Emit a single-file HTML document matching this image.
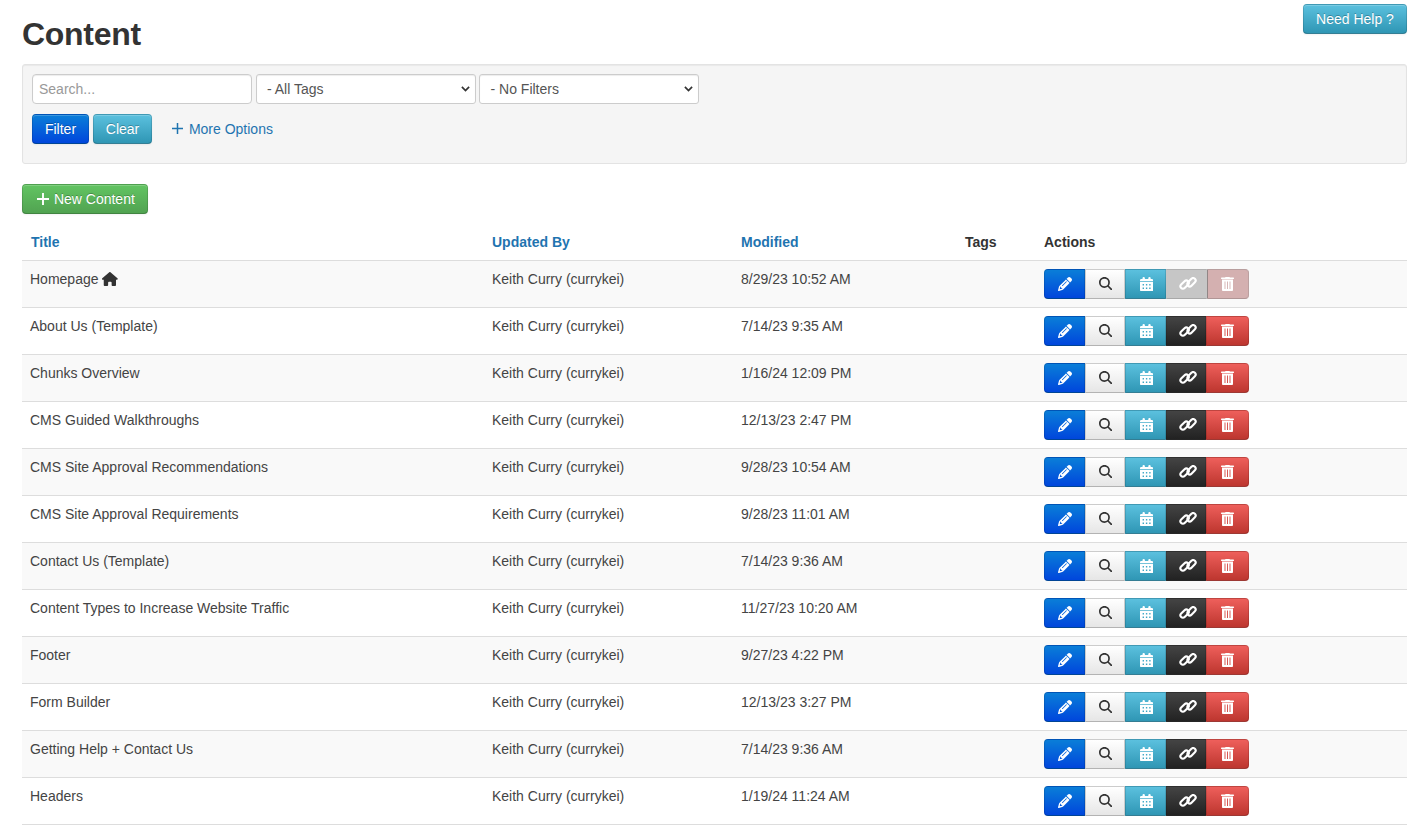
<!DOCTYPE html>
<html><head><meta charset="utf-8">
<style>
*{box-sizing:border-box}
html,body{margin:0;padding:0;background:#fff}
body{font-family:"Liberation Sans",sans-serif;font-size:14px;line-height:20px;color:#333;width:1425px;height:825px;overflow:hidden;position:relative}
h1{position:absolute;left:22px;top:13.5px;margin:0;font-size:32px;line-height:40px;font-weight:bold;color:#333;letter-spacing:-0.3px}
.btn{position:absolute;display:inline-block;height:30px;padding:4px 0;font-size:14px;line-height:20px;text-align:center;color:#fff;border:1px solid rgba(0,0,0,.12);border-bottom-color:rgba(0,0,0,.28);border-radius:4px;text-shadow:0 -1px 0 rgba(0,0,0,.25);box-shadow:inset 0 1px 0 rgba(255,255,255,.2),0 1px 2px rgba(0,0,0,.05)}
.b-info{background:#49afcd linear-gradient(#5bc0de,#2f96b4) repeat-x}
.b-primary{background:#0060d0 linear-gradient(#0a7ed8,#0046dc) repeat-x}
.b-success{background:#5bb75b linear-gradient(#62c462,#51a351) repeat-x}
.help{left:1303px;top:4px;width:104px}
.well{position:absolute;left:22px;top:64px;width:1385px;height:100px;background:#f5f5f5;border:1px solid #e3e3e3;border-radius:3px;box-shadow:inset 0 1px 1px rgba(0,0,0,.05)}
.inp{position:absolute;top:74px;height:30px;width:220px;background:#fff;border:1px solid #ccc;border-radius:4px;box-shadow:inset 0 1px 1px rgba(0,0,0,.075);font-size:14px;line-height:20px;padding:4px 0}
.inp span{position:absolute;top:4px}
.ph{color:#999}
.sel{color:#555}
.chev{position:absolute;top:11px;width:10px;height:6px}
.more{position:absolute;left:171px;top:119px;color:#1f74b0;white-space:nowrap}
table{position:absolute;left:22px;top:224px;border-collapse:collapse;table-layout:fixed;width:1385px}
th,td{padding:8px;text-align:left;vertical-align:top;line-height:20px}
th{font-weight:bold;vertical-align:bottom;height:36px}
th a{color:#1f74b0;text-decoration:none}
td{border-top:1px solid #ddd;height:47px;color:#444}
tbody tr:nth-child(odd) td{background:#f9f9f9}
tbody tr:last-child td{border-bottom:1px solid #ddd}
.grp{display:flex;height:30px;width:205px}
.g{height:30px;position:relative;border:1px solid rgba(0,0,0,.12);border-bottom-color:rgba(0,0,0,.28)}
.g svg{position:absolute}
.g1{width:41px;border-radius:4px 0 0 4px;background:#0060d0 linear-gradient(#0a7ed8,#0046dc) repeat-x}
.g2{width:40px;background:#f5f5f5 linear-gradient(#fff,#e6e6e6) repeat-x;border-color:#ccc #ccc #b3b3b3}
.g3{width:41px;background:#49afcd linear-gradient(#5bc0de,#2f96b4) repeat-x}
.g4{width:40px;background:#363636 linear-gradient(#444,#222) repeat-x}
.g5{width:43px;border-radius:0 4px 4px 0;background:#da4f49 linear-gradient(#ee5f5b,#bd362f) repeat-x}
.dis .g4{width:41px;background:#c6c6c6;border-color:#b0b0b0 #c6c6c6 #a8a8a8 #c6c6c6}
.dis .g5 svg{left:13.3px!important}
.dis .g5{width:42px;background:#d4b0b0;border-color:#b89e9e #bba0a0 #b09595 #918686}
</style></head><body>
<h1>Content</h1>
<div class="btn b-info help">Need Help ?</div>
<div class="well"></div>
<div class="inp" style="left:32px"><span class="ph" style="left:6px">Search...</span></div>
<div class="inp" style="left:256px;border-radius:3px"><span class="sel" style="left:10px">- All Tags</span>
<svg class="chev" style="left:204px;width:9px;height:6px;top:10.8px" viewBox="0 0 9 6"><path d="M.9 .9L4.5 4.5L8.1 .9" fill="none" stroke="#333" stroke-width="1.7"/></svg></div>
<div class="inp" style="left:479px;border-radius:3px"><span class="sel" style="left:10.5px">- No Filters</span>
<svg class="chev" style="left:204px;width:9px;height:6px;top:10.8px" viewBox="0 0 9 6"><path d="M.9 .9L4.5 4.5L8.1 .9" fill="none" stroke="#333" stroke-width="1.7"/></svg></div>
<div class="btn b-primary" style="left:32px;top:114px;width:57px">Filter</div>
<div class="btn b-info" style="left:93px;top:114px;width:59px">Clear</div>
<div class="more"><svg width="11" height="11" viewBox="0 0 11 11" style="position:relative;top:0px;left:0.5px;margin-right:3px"><path d="M5.5 0V11M0 5.5H11" stroke="#1f74b0" stroke-width="1.5"/></svg> More Options</div>
<div class="btn b-success" style="left:22px;top:184px;width:126px;text-align:left;padding-left:13.5px"><svg width="12" height="12" viewBox="0 0 12 12" style="position:relative;top:1px;margin-right:1.5px"><path d="M6 0V12M0 6H12" stroke="#fff" stroke-width="1.9"/></svg> New Content</div>
<table>
<colgroup><col style="width:462px"><col style="width:249px"><col style="width:224px"><col style="width:79px"><col style="width:371px"></colgroup>
<thead><tr><th style="padding-left:9px"><a>Title</a></th><th><a>Updated By</a></th><th><a>Modified</a></th><th>Tags</th><th>Actions</th></tr></thead>
<tbody id="tb">
<tr class="dis"><td>Homepage <svg style="vertical-align:-2px;margin-left:0px" width="15.75" height="14" viewBox="0 0 576 512"><path fill="#333" d="M575.8 255.5c0 18-15 32.1-32 32.1h-32l.7 160.2c0 2.7-.2 5.4-.5 8.1V472c0 22.1-17.9 40-40 40H456c-1.1 0-2.2 0-3.3-.1c-1.4 .1-2.8 .1-4.2 .1H416 392c-22.1 0-40-17.900-40-40V448 384c0-17.7-14.3-32-32-32H256c-17.7 0-32 14.3-32 32v64 24c0 22.1-17.9 40-40 40H160 128.1c-1.5 0-3-.1-4.5-.2c-1.2 .1-2.4 .2-3.6 .2H104c-22.1 0-40-17.9-40-40V360c0-.9 0-1.9 .1-2.8V287.6H32c-18 0-32-14-32-32.1c0-9 3-17 10-24L266.4 8c7-7 15-8 22-8s15 2 21 7L564.8 231.5c8 7 12 15 11 24z"/></svg></td><td>Keith Curry (currykei)</td><td>8/29/23 10:52 AM</td><td></td><td><div class="grp"><div class="g g1"><svg style="left:13px;top:7px" width="14" height="14" viewBox="0 0 512 512"><path fill="#fff" d="M410.3 231l11.3-11.3-33.9-33.9-62.1-62.1L291.7 89.8l-11.3 11.3-22.6 22.6L58.6 322.9c-10.4 10.4-18 23.300-22.2 37.4L1 480.7c-2.5 8.4-.2 17.5 6.1 23.7s15.3 8.5 23.7 6.1l120.3-35.4c14.1-4.2 27-11.8 37.4-22.2L387.7 253.7 410.3 231zM160 399.4l-9.1 22.7c-4 3.1-8.5 5.4-13.3 6.9L59.4 452l23-78.1c1.4-4.9 3.8-9.4 6.9-13.3l22.7-9.1v32c0 8.8 7.2 16 16 16h32zM362.7 18.7L348.3 33.2 325.7 55.8 314.3 67.1l33.9 33.9 62.1 62.1 33.9 33.9 11.3-11.3 22.6-22.6 14.5-14.5c25-25 25-65.5 0-90.5L453.3 18.7c-25-25-65.5-25-90.5 0zm-47.4 168l-144 144c-6.2 6.2-16.4 6.2-22.6 0s-6.2-16.4 0-22.6l144-144c6.2-6.2 16.4-6.2 22.6 0s6.2 16.4 0 22.6z"/></svg></div><div class="g g2"><svg style="left:13px;top:7px" width="13.4" height="13.4" viewBox="0 0 512 512"><path fill="#333" d="M416 208c0 45.9-14.9 88.3-40 122.7L502.6 457.4c12.5 12.5 12.5 32.8 0 45.3s-32.8 12.5-45.3 0L330.7 376c-34.4 25.2-76.8 40-122.7 40C93.1 416 0 322.9 0 208S93.1 0 208 0S416 93.1 416 208zM208 352a144 144 0 1 0 0-288 144 144 0 1 0 0 288z"/></svg></div><div class="g g3"><svg style="left:13.9px;top:6.8px" width="13.2" height="14.2" viewBox="0 0 13.2 14.2"><path fill="#fff" fill-rule="evenodd" d="M2.5 2.1V1.2A1.2 1.2 0 0 1 4.9 1.2V2.1H8.3V1.2A1.2 1.2 0 0 1 10.7 1.2V2.1H12A1.2 1.2 0 0 1 13.2 3.3V4.3H0V3.3A1.2 1.2 0 0 1 1.2 2.1ZM0 4.9H13.2V13A1.2 1.2 0 0 1 12 14.2H1.2A1.2 1.2 0 0 1 0 13ZM2.6 7.1h1.4v1.4h-1.4ZM5.9 7.1h1.4v1.4h-1.4ZM9.2 7.1h1.4v1.4h-1.4ZM2.6 10.5h1.4v1.4h-1.4ZM5.9 10.5h1.4v1.4h-1.4ZM9.2 10.5h1.4v1.4h-1.4Z"/></svg></div><div class="g g4"><svg style="left:12px;top:7px" width="18" height="14" viewBox="0 0 18 14"><g fill="none" stroke="#fff" stroke-width="2.1"><rect x="0.75" y="5.15" width="9.7" height="4.9" rx="2.45" transform="rotate(-45 5.6 7.6)"/><rect x="7.61" y="2.82" width="9.7" height="4.9" rx="2.45" transform="rotate(-45 12.46 5.27)"/></g></svg></div><div class="g g5"><svg style="left:14.3px;top:7px" width="13" height="14.3" viewBox="0 0 13 14.3"><path fill="#fff" fill-rule="evenodd" d="M4.5 0H8.5L8.9 .4H12.4A.6 .6 0 0 1 13 1V1.6A.4 .4 0 0 1 12.6 2H.4A.4 .4 0 0 1 0 1.6V1A.6 .6 0 0 1 .6 .4H4.1ZM1 2.4H12V12.7A1.6 1.6 0 0 1 10.4 14.3H2.6A1.6 1.6 0 0 1 1 12.7ZM3.55 4.4V12H4.45V4.4ZM6.05 4.4V12H6.95V4.4ZM8.55 4.4V12H9.45V4.4Z"/></svg></div></div></td></tr>
<tr><td>About Us (Template)</td><td>Keith Curry (currykei)</td><td>7/14/23 9:35 AM</td><td></td><td><div class="grp"><div class="g g1"><svg style="left:13px;top:7px" width="14" height="14" viewBox="0 0 512 512"><path fill="#fff" d="M410.3 231l11.3-11.3-33.9-33.9-62.1-62.1L291.7 89.8l-11.3 11.3-22.6 22.6L58.6 322.9c-10.4 10.4-18 23.300-22.2 37.4L1 480.7c-2.5 8.4-.2 17.5 6.1 23.7s15.3 8.5 23.7 6.1l120.3-35.4c14.1-4.2 27-11.8 37.4-22.2L387.7 253.7 410.3 231zM160 399.4l-9.1 22.7c-4 3.1-8.5 5.4-13.3 6.9L59.4 452l23-78.1c1.4-4.9 3.8-9.4 6.9-13.3l22.7-9.1v32c0 8.8 7.2 16 16 16h32zM362.7 18.7L348.3 33.2 325.7 55.8 314.3 67.1l33.9 33.9 62.1 62.1 33.9 33.9 11.3-11.3 22.6-22.6 14.5-14.5c25-25 25-65.5 0-90.5L453.3 18.7c-25-25-65.5-25-90.5 0zm-47.4 168l-144 144c-6.2 6.2-16.4 6.2-22.6 0s-6.2-16.4 0-22.6l144-144c6.2-6.2 16.4-6.2 22.6 0s6.2 16.4 0 22.6z"/></svg></div><div class="g g2"><svg style="left:13px;top:7px" width="13.4" height="13.4" viewBox="0 0 512 512"><path fill="#333" d="M416 208c0 45.9-14.9 88.3-40 122.7L502.6 457.4c12.5 12.5 12.5 32.8 0 45.3s-32.8 12.5-45.3 0L330.7 376c-34.4 25.2-76.8 40-122.7 40C93.1 416 0 322.9 0 208S93.1 0 208 0S416 93.1 416 208zM208 352a144 144 0 1 0 0-288 144 144 0 1 0 0 288z"/></svg></div><div class="g g3"><svg style="left:13.9px;top:6.8px" width="13.2" height="14.2" viewBox="0 0 13.2 14.2"><path fill="#fff" fill-rule="evenodd" d="M2.5 2.1V1.2A1.2 1.2 0 0 1 4.9 1.2V2.1H8.3V1.2A1.2 1.2 0 0 1 10.7 1.2V2.1H12A1.2 1.2 0 0 1 13.2 3.3V4.3H0V3.3A1.2 1.2 0 0 1 1.2 2.1ZM0 4.9H13.2V13A1.2 1.2 0 0 1 12 14.2H1.2A1.2 1.2 0 0 1 0 13ZM2.6 7.1h1.4v1.4h-1.4ZM5.9 7.1h1.4v1.4h-1.4ZM9.2 7.1h1.4v1.4h-1.4ZM2.6 10.5h1.4v1.4h-1.4ZM5.9 10.5h1.4v1.4h-1.4ZM9.2 10.5h1.4v1.4h-1.4Z"/></svg></div><div class="g g4"><svg style="left:12px;top:7px" width="18" height="14" viewBox="0 0 18 14"><g fill="none" stroke="#fff" stroke-width="2.1"><rect x="0.75" y="5.15" width="9.7" height="4.9" rx="2.45" transform="rotate(-45 5.6 7.6)"/><rect x="7.61" y="2.82" width="9.7" height="4.9" rx="2.45" transform="rotate(-45 12.46 5.27)"/></g></svg></div><div class="g g5"><svg style="left:14.3px;top:7px" width="13" height="14.3" viewBox="0 0 13 14.3"><path fill="#fff" fill-rule="evenodd" d="M4.5 0H8.5L8.9 .4H12.4A.6 .6 0 0 1 13 1V1.6A.4 .4 0 0 1 12.6 2H.4A.4 .4 0 0 1 0 1.6V1A.6 .6 0 0 1 .6 .4H4.1ZM1 2.4H12V12.7A1.6 1.6 0 0 1 10.4 14.3H2.6A1.6 1.6 0 0 1 1 12.7ZM3.55 4.4V12H4.45V4.4ZM6.05 4.4V12H6.95V4.4ZM8.55 4.4V12H9.45V4.4Z"/></svg></div></div></td></tr>
<tr><td>Chunks Overview</td><td>Keith Curry (currykei)</td><td>1/16/24 12:09 PM</td><td></td><td><div class="grp"><div class="g g1"><svg style="left:13px;top:7px" width="14" height="14" viewBox="0 0 512 512"><path fill="#fff" d="M410.3 231l11.3-11.3-33.9-33.9-62.1-62.1L291.7 89.8l-11.3 11.3-22.6 22.6L58.6 322.9c-10.4 10.4-18 23.300-22.2 37.4L1 480.7c-2.5 8.4-.2 17.5 6.1 23.7s15.3 8.5 23.7 6.1l120.3-35.4c14.1-4.2 27-11.8 37.4-22.2L387.7 253.7 410.3 231zM160 399.4l-9.1 22.7c-4 3.1-8.5 5.4-13.3 6.9L59.4 452l23-78.1c1.4-4.9 3.8-9.4 6.9-13.3l22.7-9.1v32c0 8.8 7.2 16 16 16h32zM362.7 18.7L348.3 33.2 325.7 55.8 314.3 67.1l33.9 33.9 62.1 62.1 33.9 33.9 11.3-11.3 22.6-22.6 14.5-14.5c25-25 25-65.5 0-90.5L453.3 18.7c-25-25-65.5-25-90.5 0zm-47.4 168l-144 144c-6.2 6.2-16.4 6.2-22.6 0s-6.2-16.4 0-22.6l144-144c6.2-6.2 16.4-6.2 22.6 0s6.2 16.4 0 22.6z"/></svg></div><div class="g g2"><svg style="left:13px;top:7px" width="13.4" height="13.4" viewBox="0 0 512 512"><path fill="#333" d="M416 208c0 45.9-14.9 88.3-40 122.7L502.6 457.4c12.5 12.5 12.5 32.8 0 45.3s-32.8 12.5-45.3 0L330.7 376c-34.4 25.2-76.8 40-122.7 40C93.1 416 0 322.9 0 208S93.1 0 208 0S416 93.1 416 208zM208 352a144 144 0 1 0 0-288 144 144 0 1 0 0 288z"/></svg></div><div class="g g3"><svg style="left:13.9px;top:6.8px" width="13.2" height="14.2" viewBox="0 0 13.2 14.2"><path fill="#fff" fill-rule="evenodd" d="M2.5 2.1V1.2A1.2 1.2 0 0 1 4.9 1.2V2.1H8.3V1.2A1.2 1.2 0 0 1 10.7 1.2V2.1H12A1.2 1.2 0 0 1 13.2 3.3V4.3H0V3.3A1.2 1.2 0 0 1 1.2 2.1ZM0 4.9H13.2V13A1.2 1.2 0 0 1 12 14.2H1.2A1.2 1.2 0 0 1 0 13ZM2.6 7.1h1.4v1.4h-1.4ZM5.9 7.1h1.4v1.4h-1.4ZM9.2 7.1h1.4v1.4h-1.4ZM2.6 10.5h1.4v1.4h-1.4ZM5.9 10.5h1.4v1.4h-1.4ZM9.2 10.5h1.4v1.4h-1.4Z"/></svg></div><div class="g g4"><svg style="left:12px;top:7px" width="18" height="14" viewBox="0 0 18 14"><g fill="none" stroke="#fff" stroke-width="2.1"><rect x="0.75" y="5.15" width="9.7" height="4.9" rx="2.45" transform="rotate(-45 5.6 7.6)"/><rect x="7.61" y="2.82" width="9.7" height="4.9" rx="2.45" transform="rotate(-45 12.46 5.27)"/></g></svg></div><div class="g g5"><svg style="left:14.3px;top:7px" width="13" height="14.3" viewBox="0 0 13 14.3"><path fill="#fff" fill-rule="evenodd" d="M4.5 0H8.5L8.9 .4H12.4A.6 .6 0 0 1 13 1V1.6A.4 .4 0 0 1 12.6 2H.4A.4 .4 0 0 1 0 1.6V1A.6 .6 0 0 1 .6 .4H4.1ZM1 2.4H12V12.7A1.6 1.6 0 0 1 10.4 14.3H2.6A1.6 1.6 0 0 1 1 12.7ZM3.55 4.4V12H4.45V4.4ZM6.05 4.4V12H6.95V4.4ZM8.55 4.4V12H9.45V4.4Z"/></svg></div></div></td></tr>
<tr><td>CMS Guided Walkthroughs</td><td>Keith Curry (currykei)</td><td>12/13/23 2:47 PM</td><td></td><td><div class="grp"><div class="g g1"><svg style="left:13px;top:7px" width="14" height="14" viewBox="0 0 512 512"><path fill="#fff" d="M410.3 231l11.3-11.3-33.9-33.9-62.1-62.1L291.7 89.8l-11.3 11.3-22.6 22.6L58.6 322.9c-10.4 10.4-18 23.300-22.2 37.4L1 480.7c-2.5 8.4-.2 17.5 6.1 23.7s15.3 8.5 23.7 6.1l120.3-35.4c14.1-4.2 27-11.8 37.4-22.2L387.7 253.7 410.3 231zM160 399.4l-9.1 22.7c-4 3.1-8.5 5.4-13.3 6.9L59.4 452l23-78.1c1.4-4.9 3.8-9.4 6.9-13.3l22.7-9.1v32c0 8.8 7.2 16 16 16h32zM362.7 18.7L348.3 33.2 325.7 55.8 314.3 67.1l33.9 33.9 62.1 62.1 33.9 33.9 11.3-11.3 22.6-22.6 14.5-14.5c25-25 25-65.5 0-90.5L453.3 18.7c-25-25-65.5-25-90.5 0zm-47.4 168l-144 144c-6.2 6.2-16.4 6.2-22.6 0s-6.2-16.4 0-22.6l144-144c6.2-6.2 16.4-6.2 22.6 0s6.2 16.4 0 22.6z"/></svg></div><div class="g g2"><svg style="left:13px;top:7px" width="13.4" height="13.4" viewBox="0 0 512 512"><path fill="#333" d="M416 208c0 45.9-14.9 88.3-40 122.7L502.6 457.4c12.5 12.5 12.5 32.8 0 45.3s-32.8 12.5-45.3 0L330.7 376c-34.4 25.2-76.8 40-122.7 40C93.1 416 0 322.9 0 208S93.1 0 208 0S416 93.1 416 208zM208 352a144 144 0 1 0 0-288 144 144 0 1 0 0 288z"/></svg></div><div class="g g3"><svg style="left:13.9px;top:6.8px" width="13.2" height="14.2" viewBox="0 0 13.2 14.2"><path fill="#fff" fill-rule="evenodd" d="M2.5 2.1V1.2A1.2 1.2 0 0 1 4.9 1.2V2.1H8.3V1.2A1.2 1.2 0 0 1 10.7 1.2V2.1H12A1.2 1.2 0 0 1 13.2 3.3V4.3H0V3.3A1.2 1.2 0 0 1 1.2 2.1ZM0 4.9H13.2V13A1.2 1.2 0 0 1 12 14.2H1.2A1.2 1.2 0 0 1 0 13ZM2.6 7.1h1.4v1.4h-1.4ZM5.9 7.1h1.4v1.4h-1.4ZM9.2 7.1h1.4v1.4h-1.4ZM2.6 10.5h1.4v1.4h-1.4ZM5.9 10.5h1.4v1.4h-1.4ZM9.2 10.5h1.4v1.4h-1.4Z"/></svg></div><div class="g g4"><svg style="left:12px;top:7px" width="18" height="14" viewBox="0 0 18 14"><g fill="none" stroke="#fff" stroke-width="2.1"><rect x="0.75" y="5.15" width="9.7" height="4.9" rx="2.45" transform="rotate(-45 5.6 7.6)"/><rect x="7.61" y="2.82" width="9.7" height="4.9" rx="2.45" transform="rotate(-45 12.46 5.27)"/></g></svg></div><div class="g g5"><svg style="left:14.3px;top:7px" width="13" height="14.3" viewBox="0 0 13 14.3"><path fill="#fff" fill-rule="evenodd" d="M4.5 0H8.5L8.9 .4H12.4A.6 .6 0 0 1 13 1V1.6A.4 .4 0 0 1 12.6 2H.4A.4 .4 0 0 1 0 1.6V1A.6 .6 0 0 1 .6 .4H4.1ZM1 2.4H12V12.7A1.6 1.6 0 0 1 10.4 14.3H2.6A1.6 1.6 0 0 1 1 12.7ZM3.55 4.4V12H4.45V4.4ZM6.05 4.4V12H6.95V4.4ZM8.55 4.4V12H9.45V4.4Z"/></svg></div></div></td></tr>
<tr><td>CMS Site Approval Recommendations</td><td>Keith Curry (currykei)</td><td>9/28/23 10:54 AM</td><td></td><td><div class="grp"><div class="g g1"><svg style="left:13px;top:7px" width="14" height="14" viewBox="0 0 512 512"><path fill="#fff" d="M410.3 231l11.3-11.3-33.9-33.9-62.1-62.1L291.7 89.8l-11.3 11.3-22.6 22.6L58.6 322.9c-10.4 10.4-18 23.300-22.2 37.4L1 480.7c-2.5 8.4-.2 17.5 6.1 23.7s15.3 8.5 23.7 6.1l120.3-35.4c14.1-4.2 27-11.8 37.4-22.2L387.7 253.7 410.3 231zM160 399.4l-9.1 22.7c-4 3.1-8.5 5.4-13.3 6.9L59.4 452l23-78.1c1.4-4.9 3.8-9.4 6.9-13.3l22.7-9.1v32c0 8.8 7.2 16 16 16h32zM362.7 18.7L348.3 33.2 325.7 55.8 314.3 67.1l33.9 33.9 62.1 62.1 33.9 33.9 11.3-11.3 22.6-22.6 14.5-14.5c25-25 25-65.5 0-90.5L453.3 18.7c-25-25-65.5-25-90.5 0zm-47.4 168l-144 144c-6.2 6.2-16.4 6.2-22.6 0s-6.2-16.4 0-22.6l144-144c6.2-6.2 16.4-6.2 22.6 0s6.2 16.4 0 22.6z"/></svg></div><div class="g g2"><svg style="left:13px;top:7px" width="13.4" height="13.4" viewBox="0 0 512 512"><path fill="#333" d="M416 208c0 45.9-14.9 88.3-40 122.7L502.6 457.4c12.5 12.5 12.5 32.8 0 45.3s-32.8 12.5-45.3 0L330.7 376c-34.4 25.2-76.8 40-122.7 40C93.1 416 0 322.9 0 208S93.1 0 208 0S416 93.1 416 208zM208 352a144 144 0 1 0 0-288 144 144 0 1 0 0 288z"/></svg></div><div class="g g3"><svg style="left:13.9px;top:6.8px" width="13.2" height="14.2" viewBox="0 0 13.2 14.2"><path fill="#fff" fill-rule="evenodd" d="M2.5 2.1V1.2A1.2 1.2 0 0 1 4.9 1.2V2.1H8.3V1.2A1.2 1.2 0 0 1 10.7 1.2V2.1H12A1.2 1.2 0 0 1 13.2 3.3V4.3H0V3.3A1.2 1.2 0 0 1 1.2 2.1ZM0 4.9H13.2V13A1.2 1.2 0 0 1 12 14.2H1.2A1.2 1.2 0 0 1 0 13ZM2.6 7.1h1.4v1.4h-1.4ZM5.9 7.1h1.4v1.4h-1.4ZM9.2 7.1h1.4v1.4h-1.4ZM2.6 10.5h1.4v1.4h-1.4ZM5.9 10.5h1.4v1.4h-1.4ZM9.2 10.5h1.4v1.4h-1.4Z"/></svg></div><div class="g g4"><svg style="left:12px;top:7px" width="18" height="14" viewBox="0 0 18 14"><g fill="none" stroke="#fff" stroke-width="2.1"><rect x="0.75" y="5.15" width="9.7" height="4.9" rx="2.45" transform="rotate(-45 5.6 7.6)"/><rect x="7.61" y="2.82" width="9.7" height="4.9" rx="2.45" transform="rotate(-45 12.46 5.27)"/></g></svg></div><div class="g g5"><svg style="left:14.3px;top:7px" width="13" height="14.3" viewBox="0 0 13 14.3"><path fill="#fff" fill-rule="evenodd" d="M4.5 0H8.5L8.9 .4H12.4A.6 .6 0 0 1 13 1V1.6A.4 .4 0 0 1 12.6 2H.4A.4 .4 0 0 1 0 1.6V1A.6 .6 0 0 1 .6 .4H4.1ZM1 2.4H12V12.7A1.6 1.6 0 0 1 10.4 14.3H2.6A1.6 1.6 0 0 1 1 12.7ZM3.55 4.4V12H4.45V4.4ZM6.05 4.4V12H6.95V4.4ZM8.55 4.4V12H9.45V4.4Z"/></svg></div></div></td></tr>
<tr><td>CMS Site Approval Requirements</td><td>Keith Curry (currykei)</td><td>9/28/23 11:01 AM</td><td></td><td><div class="grp"><div class="g g1"><svg style="left:13px;top:7px" width="14" height="14" viewBox="0 0 512 512"><path fill="#fff" d="M410.3 231l11.3-11.3-33.9-33.9-62.1-62.1L291.7 89.8l-11.3 11.3-22.6 22.6L58.6 322.9c-10.4 10.4-18 23.300-22.2 37.4L1 480.7c-2.5 8.4-.2 17.5 6.1 23.7s15.3 8.5 23.7 6.1l120.3-35.4c14.1-4.2 27-11.8 37.4-22.2L387.7 253.7 410.3 231zM160 399.4l-9.1 22.7c-4 3.1-8.5 5.4-13.3 6.9L59.4 452l23-78.1c1.4-4.9 3.8-9.4 6.9-13.3l22.7-9.1v32c0 8.8 7.2 16 16 16h32zM362.7 18.7L348.3 33.2 325.7 55.8 314.3 67.1l33.9 33.9 62.1 62.1 33.9 33.9 11.3-11.3 22.6-22.6 14.5-14.5c25-25 25-65.5 0-90.5L453.3 18.7c-25-25-65.5-25-90.5 0zm-47.4 168l-144 144c-6.2 6.2-16.4 6.2-22.6 0s-6.2-16.4 0-22.6l144-144c6.2-6.2 16.4-6.2 22.6 0s6.2 16.4 0 22.6z"/></svg></div><div class="g g2"><svg style="left:13px;top:7px" width="13.4" height="13.4" viewBox="0 0 512 512"><path fill="#333" d="M416 208c0 45.9-14.9 88.3-40 122.7L502.6 457.4c12.5 12.5 12.5 32.8 0 45.3s-32.8 12.5-45.3 0L330.7 376c-34.4 25.2-76.8 40-122.7 40C93.1 416 0 322.9 0 208S93.1 0 208 0S416 93.1 416 208zM208 352a144 144 0 1 0 0-288 144 144 0 1 0 0 288z"/></svg></div><div class="g g3"><svg style="left:13.9px;top:6.8px" width="13.2" height="14.2" viewBox="0 0 13.2 14.2"><path fill="#fff" fill-rule="evenodd" d="M2.5 2.1V1.2A1.2 1.2 0 0 1 4.9 1.2V2.1H8.3V1.2A1.2 1.2 0 0 1 10.7 1.2V2.1H12A1.2 1.2 0 0 1 13.2 3.3V4.3H0V3.3A1.2 1.2 0 0 1 1.2 2.1ZM0 4.9H13.2V13A1.2 1.2 0 0 1 12 14.2H1.2A1.2 1.2 0 0 1 0 13ZM2.6 7.1h1.4v1.4h-1.4ZM5.9 7.1h1.4v1.4h-1.4ZM9.2 7.1h1.4v1.4h-1.4ZM2.6 10.5h1.4v1.4h-1.4ZM5.9 10.5h1.4v1.4h-1.4ZM9.2 10.5h1.4v1.4h-1.4Z"/></svg></div><div class="g g4"><svg style="left:12px;top:7px" width="18" height="14" viewBox="0 0 18 14"><g fill="none" stroke="#fff" stroke-width="2.1"><rect x="0.75" y="5.15" width="9.7" height="4.9" rx="2.45" transform="rotate(-45 5.6 7.6)"/><rect x="7.61" y="2.82" width="9.7" height="4.9" rx="2.45" transform="rotate(-45 12.46 5.27)"/></g></svg></div><div class="g g5"><svg style="left:14.3px;top:7px" width="13" height="14.3" viewBox="0 0 13 14.3"><path fill="#fff" fill-rule="evenodd" d="M4.5 0H8.5L8.9 .4H12.4A.6 .6 0 0 1 13 1V1.6A.4 .4 0 0 1 12.6 2H.4A.4 .4 0 0 1 0 1.6V1A.6 .6 0 0 1 .6 .4H4.1ZM1 2.4H12V12.7A1.6 1.6 0 0 1 10.4 14.3H2.6A1.6 1.6 0 0 1 1 12.7ZM3.55 4.4V12H4.45V4.4ZM6.05 4.4V12H6.95V4.4ZM8.55 4.4V12H9.45V4.4Z"/></svg></div></div></td></tr>
<tr><td>Contact Us (Template)</td><td>Keith Curry (currykei)</td><td>7/14/23 9:36 AM</td><td></td><td><div class="grp"><div class="g g1"><svg style="left:13px;top:7px" width="14" height="14" viewBox="0 0 512 512"><path fill="#fff" d="M410.3 231l11.3-11.3-33.9-33.9-62.1-62.1L291.7 89.8l-11.3 11.3-22.6 22.6L58.6 322.9c-10.4 10.4-18 23.300-22.2 37.4L1 480.7c-2.5 8.4-.2 17.5 6.1 23.7s15.3 8.5 23.7 6.1l120.3-35.4c14.1-4.2 27-11.8 37.4-22.2L387.7 253.7 410.3 231zM160 399.4l-9.1 22.7c-4 3.1-8.5 5.4-13.3 6.9L59.4 452l23-78.1c1.4-4.9 3.8-9.4 6.9-13.3l22.7-9.1v32c0 8.8 7.2 16 16 16h32zM362.7 18.7L348.3 33.2 325.7 55.8 314.3 67.1l33.9 33.9 62.1 62.1 33.9 33.9 11.3-11.3 22.6-22.6 14.5-14.5c25-25 25-65.5 0-90.5L453.3 18.7c-25-25-65.5-25-90.5 0zm-47.4 168l-144 144c-6.2 6.2-16.4 6.2-22.6 0s-6.2-16.4 0-22.6l144-144c6.2-6.2 16.4-6.2 22.6 0s6.2 16.4 0 22.6z"/></svg></div><div class="g g2"><svg style="left:13px;top:7px" width="13.4" height="13.4" viewBox="0 0 512 512"><path fill="#333" d="M416 208c0 45.9-14.9 88.3-40 122.7L502.6 457.4c12.5 12.5 12.5 32.8 0 45.3s-32.8 12.5-45.3 0L330.7 376c-34.4 25.2-76.8 40-122.7 40C93.1 416 0 322.9 0 208S93.1 0 208 0S416 93.1 416 208zM208 352a144 144 0 1 0 0-288 144 144 0 1 0 0 288z"/></svg></div><div class="g g3"><svg style="left:13.9px;top:6.8px" width="13.2" height="14.2" viewBox="0 0 13.2 14.2"><path fill="#fff" fill-rule="evenodd" d="M2.5 2.1V1.2A1.2 1.2 0 0 1 4.9 1.2V2.1H8.3V1.2A1.2 1.2 0 0 1 10.7 1.2V2.1H12A1.2 1.2 0 0 1 13.2 3.3V4.3H0V3.3A1.2 1.2 0 0 1 1.2 2.1ZM0 4.9H13.2V13A1.2 1.2 0 0 1 12 14.2H1.2A1.2 1.2 0 0 1 0 13ZM2.6 7.1h1.4v1.4h-1.4ZM5.9 7.1h1.4v1.4h-1.4ZM9.2 7.1h1.4v1.4h-1.4ZM2.6 10.5h1.4v1.4h-1.4ZM5.9 10.5h1.4v1.4h-1.4ZM9.2 10.5h1.4v1.4h-1.4Z"/></svg></div><div class="g g4"><svg style="left:12px;top:7px" width="18" height="14" viewBox="0 0 18 14"><g fill="none" stroke="#fff" stroke-width="2.1"><rect x="0.75" y="5.15" width="9.7" height="4.9" rx="2.45" transform="rotate(-45 5.6 7.6)"/><rect x="7.61" y="2.82" width="9.7" height="4.9" rx="2.45" transform="rotate(-45 12.46 5.27)"/></g></svg></div><div class="g g5"><svg style="left:14.3px;top:7px" width="13" height="14.3" viewBox="0 0 13 14.3"><path fill="#fff" fill-rule="evenodd" d="M4.5 0H8.5L8.9 .4H12.4A.6 .6 0 0 1 13 1V1.6A.4 .4 0 0 1 12.6 2H.4A.4 .4 0 0 1 0 1.6V1A.6 .6 0 0 1 .6 .4H4.1ZM1 2.4H12V12.7A1.6 1.6 0 0 1 10.4 14.3H2.6A1.6 1.6 0 0 1 1 12.7ZM3.55 4.4V12H4.45V4.4ZM6.05 4.4V12H6.95V4.4ZM8.55 4.4V12H9.45V4.4Z"/></svg></div></div></td></tr>
<tr><td>Content Types to Increase Website Traffic</td><td>Keith Curry (currykei)</td><td>11/27/23 10:20 AM</td><td></td><td><div class="grp"><div class="g g1"><svg style="left:13px;top:7px" width="14" height="14" viewBox="0 0 512 512"><path fill="#fff" d="M410.3 231l11.3-11.3-33.9-33.9-62.1-62.1L291.7 89.8l-11.3 11.3-22.6 22.6L58.6 322.9c-10.4 10.4-18 23.300-22.2 37.4L1 480.7c-2.5 8.4-.2 17.5 6.1 23.7s15.3 8.5 23.7 6.1l120.3-35.4c14.1-4.2 27-11.8 37.4-22.2L387.7 253.7 410.3 231zM160 399.4l-9.1 22.7c-4 3.1-8.5 5.4-13.3 6.9L59.4 452l23-78.1c1.4-4.9 3.8-9.4 6.9-13.3l22.7-9.1v32c0 8.8 7.2 16 16 16h32zM362.7 18.7L348.3 33.2 325.7 55.8 314.3 67.1l33.9 33.9 62.1 62.1 33.9 33.9 11.3-11.3 22.6-22.6 14.5-14.5c25-25 25-65.5 0-90.5L453.3 18.7c-25-25-65.5-25-90.5 0zm-47.4 168l-144 144c-6.2 6.2-16.4 6.2-22.6 0s-6.2-16.4 0-22.6l144-144c6.2-6.2 16.4-6.2 22.6 0s6.2 16.4 0 22.6z"/></svg></div><div class="g g2"><svg style="left:13px;top:7px" width="13.4" height="13.4" viewBox="0 0 512 512"><path fill="#333" d="M416 208c0 45.9-14.9 88.3-40 122.7L502.6 457.4c12.5 12.5 12.5 32.8 0 45.3s-32.8 12.5-45.3 0L330.7 376c-34.4 25.2-76.8 40-122.7 40C93.1 416 0 322.9 0 208S93.1 0 208 0S416 93.1 416 208zM208 352a144 144 0 1 0 0-288 144 144 0 1 0 0 288z"/></svg></div><div class="g g3"><svg style="left:13.9px;top:6.8px" width="13.2" height="14.2" viewBox="0 0 13.2 14.2"><path fill="#fff" fill-rule="evenodd" d="M2.5 2.1V1.2A1.2 1.2 0 0 1 4.9 1.2V2.1H8.3V1.2A1.2 1.2 0 0 1 10.7 1.2V2.1H12A1.2 1.2 0 0 1 13.2 3.3V4.3H0V3.3A1.2 1.2 0 0 1 1.2 2.1ZM0 4.9H13.2V13A1.2 1.2 0 0 1 12 14.2H1.2A1.2 1.2 0 0 1 0 13ZM2.6 7.1h1.4v1.4h-1.4ZM5.9 7.1h1.4v1.4h-1.4ZM9.2 7.1h1.4v1.4h-1.4ZM2.6 10.5h1.4v1.4h-1.4ZM5.9 10.5h1.4v1.4h-1.4ZM9.2 10.5h1.4v1.4h-1.4Z"/></svg></div><div class="g g4"><svg style="left:12px;top:7px" width="18" height="14" viewBox="0 0 18 14"><g fill="none" stroke="#fff" stroke-width="2.1"><rect x="0.75" y="5.15" width="9.7" height="4.9" rx="2.45" transform="rotate(-45 5.6 7.6)"/><rect x="7.61" y="2.82" width="9.7" height="4.9" rx="2.45" transform="rotate(-45 12.46 5.27)"/></g></svg></div><div class="g g5"><svg style="left:14.3px;top:7px" width="13" height="14.3" viewBox="0 0 13 14.3"><path fill="#fff" fill-rule="evenodd" d="M4.5 0H8.5L8.9 .4H12.4A.6 .6 0 0 1 13 1V1.6A.4 .4 0 0 1 12.6 2H.4A.4 .4 0 0 1 0 1.6V1A.6 .6 0 0 1 .6 .4H4.1ZM1 2.4H12V12.7A1.6 1.6 0 0 1 10.4 14.3H2.6A1.6 1.6 0 0 1 1 12.7ZM3.55 4.4V12H4.45V4.4ZM6.05 4.4V12H6.95V4.4ZM8.55 4.4V12H9.45V4.4Z"/></svg></div></div></td></tr>
<tr><td>Footer</td><td>Keith Curry (currykei)</td><td>9/27/23 4:22 PM</td><td></td><td><div class="grp"><div class="g g1"><svg style="left:13px;top:7px" width="14" height="14" viewBox="0 0 512 512"><path fill="#fff" d="M410.3 231l11.3-11.3-33.9-33.9-62.1-62.1L291.7 89.8l-11.3 11.3-22.6 22.6L58.6 322.9c-10.4 10.4-18 23.300-22.2 37.4L1 480.7c-2.5 8.4-.2 17.5 6.1 23.7s15.3 8.5 23.7 6.1l120.3-35.4c14.1-4.2 27-11.8 37.4-22.2L387.7 253.7 410.3 231zM160 399.4l-9.1 22.7c-4 3.1-8.5 5.4-13.3 6.9L59.4 452l23-78.1c1.4-4.9 3.8-9.4 6.9-13.3l22.7-9.1v32c0 8.8 7.2 16 16 16h32zM362.7 18.7L348.3 33.2 325.7 55.8 314.3 67.1l33.9 33.9 62.1 62.1 33.9 33.9 11.3-11.3 22.6-22.6 14.5-14.5c25-25 25-65.5 0-90.5L453.3 18.7c-25-25-65.5-25-90.5 0zm-47.4 168l-144 144c-6.2 6.2-16.4 6.2-22.6 0s-6.2-16.4 0-22.6l144-144c6.2-6.2 16.4-6.2 22.6 0s6.2 16.4 0 22.6z"/></svg></div><div class="g g2"><svg style="left:13px;top:7px" width="13.4" height="13.4" viewBox="0 0 512 512"><path fill="#333" d="M416 208c0 45.9-14.9 88.3-40 122.7L502.6 457.4c12.5 12.5 12.5 32.8 0 45.3s-32.8 12.5-45.3 0L330.7 376c-34.4 25.2-76.8 40-122.7 40C93.1 416 0 322.9 0 208S93.1 0 208 0S416 93.1 416 208zM208 352a144 144 0 1 0 0-288 144 144 0 1 0 0 288z"/></svg></div><div class="g g3"><svg style="left:13.9px;top:6.8px" width="13.2" height="14.2" viewBox="0 0 13.2 14.2"><path fill="#fff" fill-rule="evenodd" d="M2.5 2.1V1.2A1.2 1.2 0 0 1 4.9 1.2V2.1H8.3V1.2A1.2 1.2 0 0 1 10.7 1.2V2.1H12A1.2 1.2 0 0 1 13.2 3.3V4.3H0V3.3A1.2 1.2 0 0 1 1.2 2.1ZM0 4.9H13.2V13A1.2 1.2 0 0 1 12 14.2H1.2A1.2 1.2 0 0 1 0 13ZM2.6 7.1h1.4v1.4h-1.4ZM5.9 7.1h1.4v1.4h-1.4ZM9.2 7.1h1.4v1.4h-1.4ZM2.6 10.5h1.4v1.4h-1.4ZM5.9 10.5h1.4v1.4h-1.4ZM9.2 10.5h1.4v1.4h-1.4Z"/></svg></div><div class="g g4"><svg style="left:12px;top:7px" width="18" height="14" viewBox="0 0 18 14"><g fill="none" stroke="#fff" stroke-width="2.1"><rect x="0.75" y="5.15" width="9.7" height="4.9" rx="2.45" transform="rotate(-45 5.6 7.6)"/><rect x="7.61" y="2.82" width="9.7" height="4.9" rx="2.45" transform="rotate(-45 12.46 5.27)"/></g></svg></div><div class="g g5"><svg style="left:14.3px;top:7px" width="13" height="14.3" viewBox="0 0 13 14.3"><path fill="#fff" fill-rule="evenodd" d="M4.5 0H8.5L8.9 .4H12.4A.6 .6 0 0 1 13 1V1.6A.4 .4 0 0 1 12.6 2H.4A.4 .4 0 0 1 0 1.6V1A.6 .6 0 0 1 .6 .4H4.1ZM1 2.4H12V12.7A1.6 1.6 0 0 1 10.4 14.3H2.6A1.6 1.6 0 0 1 1 12.7ZM3.55 4.4V12H4.45V4.4ZM6.05 4.4V12H6.95V4.4ZM8.55 4.4V12H9.45V4.4Z"/></svg></div></div></td></tr>
<tr><td>Form Builder</td><td>Keith Curry (currykei)</td><td>12/13/23 3:27 PM</td><td></td><td><div class="grp"><div class="g g1"><svg style="left:13px;top:7px" width="14" height="14" viewBox="0 0 512 512"><path fill="#fff" d="M410.3 231l11.3-11.3-33.9-33.9-62.1-62.1L291.7 89.8l-11.3 11.3-22.6 22.6L58.6 322.9c-10.4 10.4-18 23.300-22.2 37.4L1 480.7c-2.5 8.4-.2 17.5 6.1 23.7s15.3 8.5 23.7 6.1l120.3-35.4c14.1-4.2 27-11.8 37.4-22.2L387.7 253.7 410.3 231zM160 399.4l-9.1 22.7c-4 3.1-8.5 5.4-13.3 6.9L59.4 452l23-78.1c1.4-4.9 3.8-9.4 6.9-13.3l22.7-9.1v32c0 8.8 7.2 16 16 16h32zM362.7 18.7L348.3 33.2 325.7 55.8 314.3 67.1l33.9 33.9 62.1 62.1 33.9 33.9 11.3-11.3 22.6-22.6 14.5-14.5c25-25 25-65.5 0-90.5L453.3 18.7c-25-25-65.5-25-90.5 0zm-47.4 168l-144 144c-6.2 6.2-16.4 6.2-22.6 0s-6.2-16.4 0-22.6l144-144c6.2-6.2 16.4-6.2 22.6 0s6.2 16.4 0 22.6z"/></svg></div><div class="g g2"><svg style="left:13px;top:7px" width="13.4" height="13.4" viewBox="0 0 512 512"><path fill="#333" d="M416 208c0 45.9-14.9 88.3-40 122.7L502.6 457.4c12.5 12.5 12.5 32.8 0 45.3s-32.8 12.5-45.3 0L330.7 376c-34.4 25.2-76.8 40-122.7 40C93.1 416 0 322.9 0 208S93.1 0 208 0S416 93.1 416 208zM208 352a144 144 0 1 0 0-288 144 144 0 1 0 0 288z"/></svg></div><div class="g g3"><svg style="left:13.9px;top:6.8px" width="13.2" height="14.2" viewBox="0 0 13.2 14.2"><path fill="#fff" fill-rule="evenodd" d="M2.5 2.1V1.2A1.2 1.2 0 0 1 4.9 1.2V2.1H8.3V1.2A1.2 1.2 0 0 1 10.7 1.2V2.1H12A1.2 1.2 0 0 1 13.2 3.3V4.3H0V3.3A1.2 1.2 0 0 1 1.2 2.1ZM0 4.9H13.2V13A1.2 1.2 0 0 1 12 14.2H1.2A1.2 1.2 0 0 1 0 13ZM2.6 7.1h1.4v1.4h-1.4ZM5.9 7.1h1.4v1.4h-1.4ZM9.2 7.1h1.4v1.4h-1.4ZM2.6 10.5h1.4v1.4h-1.4ZM5.9 10.5h1.4v1.4h-1.4ZM9.2 10.5h1.4v1.4h-1.4Z"/></svg></div><div class="g g4"><svg style="left:12px;top:7px" width="18" height="14" viewBox="0 0 18 14"><g fill="none" stroke="#fff" stroke-width="2.1"><rect x="0.75" y="5.15" width="9.7" height="4.9" rx="2.45" transform="rotate(-45 5.6 7.6)"/><rect x="7.61" y="2.82" width="9.7" height="4.9" rx="2.45" transform="rotate(-45 12.46 5.27)"/></g></svg></div><div class="g g5"><svg style="left:14.3px;top:7px" width="13" height="14.3" viewBox="0 0 13 14.3"><path fill="#fff" fill-rule="evenodd" d="M4.5 0H8.5L8.9 .4H12.4A.6 .6 0 0 1 13 1V1.6A.4 .4 0 0 1 12.6 2H.4A.4 .4 0 0 1 0 1.6V1A.6 .6 0 0 1 .6 .4H4.1ZM1 2.4H12V12.7A1.6 1.6 0 0 1 10.4 14.3H2.6A1.6 1.6 0 0 1 1 12.7ZM3.55 4.4V12H4.45V4.4ZM6.05 4.4V12H6.95V4.4ZM8.55 4.4V12H9.45V4.4Z"/></svg></div></div></td></tr>
<tr><td>Getting Help + Contact Us</td><td>Keith Curry (currykei)</td><td>7/14/23 9:36 AM</td><td></td><td><div class="grp"><div class="g g1"><svg style="left:13px;top:7px" width="14" height="14" viewBox="0 0 512 512"><path fill="#fff" d="M410.3 231l11.3-11.3-33.9-33.9-62.1-62.1L291.7 89.8l-11.3 11.3-22.6 22.6L58.6 322.9c-10.4 10.4-18 23.300-22.2 37.4L1 480.7c-2.5 8.4-.2 17.5 6.1 23.7s15.3 8.5 23.7 6.1l120.3-35.4c14.1-4.2 27-11.8 37.4-22.2L387.7 253.7 410.3 231zM160 399.4l-9.1 22.7c-4 3.1-8.5 5.4-13.3 6.9L59.4 452l23-78.1c1.4-4.9 3.8-9.4 6.9-13.3l22.7-9.1v32c0 8.8 7.2 16 16 16h32zM362.7 18.7L348.3 33.2 325.7 55.8 314.3 67.1l33.9 33.9 62.1 62.1 33.9 33.9 11.3-11.3 22.6-22.6 14.5-14.5c25-25 25-65.5 0-90.5L453.3 18.7c-25-25-65.5-25-90.5 0zm-47.4 168l-144 144c-6.2 6.2-16.4 6.2-22.6 0s-6.2-16.4 0-22.6l144-144c6.2-6.2 16.4-6.2 22.6 0s6.2 16.4 0 22.6z"/></svg></div><div class="g g2"><svg style="left:13px;top:7px" width="13.4" height="13.4" viewBox="0 0 512 512"><path fill="#333" d="M416 208c0 45.9-14.9 88.3-40 122.7L502.6 457.4c12.5 12.5 12.5 32.8 0 45.3s-32.8 12.5-45.3 0L330.7 376c-34.4 25.2-76.8 40-122.7 40C93.1 416 0 322.9 0 208S93.1 0 208 0S416 93.1 416 208zM208 352a144 144 0 1 0 0-288 144 144 0 1 0 0 288z"/></svg></div><div class="g g3"><svg style="left:13.9px;top:6.8px" width="13.2" height="14.2" viewBox="0 0 13.2 14.2"><path fill="#fff" fill-rule="evenodd" d="M2.5 2.1V1.2A1.2 1.2 0 0 1 4.9 1.2V2.1H8.3V1.2A1.2 1.2 0 0 1 10.7 1.2V2.1H12A1.2 1.2 0 0 1 13.2 3.3V4.3H0V3.3A1.2 1.2 0 0 1 1.2 2.1ZM0 4.9H13.2V13A1.2 1.2 0 0 1 12 14.2H1.2A1.2 1.2 0 0 1 0 13ZM2.6 7.1h1.4v1.4h-1.4ZM5.9 7.1h1.4v1.4h-1.4ZM9.2 7.1h1.4v1.4h-1.4ZM2.6 10.5h1.4v1.4h-1.4ZM5.9 10.5h1.4v1.4h-1.4ZM9.2 10.5h1.4v1.4h-1.4Z"/></svg></div><div class="g g4"><svg style="left:12px;top:7px" width="18" height="14" viewBox="0 0 18 14"><g fill="none" stroke="#fff" stroke-width="2.1"><rect x="0.75" y="5.15" width="9.7" height="4.9" rx="2.45" transform="rotate(-45 5.6 7.6)"/><rect x="7.61" y="2.82" width="9.7" height="4.9" rx="2.45" transform="rotate(-45 12.46 5.27)"/></g></svg></div><div class="g g5"><svg style="left:14.3px;top:7px" width="13" height="14.3" viewBox="0 0 13 14.3"><path fill="#fff" fill-rule="evenodd" d="M4.5 0H8.5L8.9 .4H12.4A.6 .6 0 0 1 13 1V1.6A.4 .4 0 0 1 12.6 2H.4A.4 .4 0 0 1 0 1.6V1A.6 .6 0 0 1 .6 .4H4.1ZM1 2.4H12V12.7A1.6 1.6 0 0 1 10.4 14.3H2.6A1.6 1.6 0 0 1 1 12.7ZM3.55 4.4V12H4.45V4.4ZM6.05 4.4V12H6.95V4.4ZM8.55 4.4V12H9.45V4.4Z"/></svg></div></div></td></tr>
<tr><td>Headers</td><td>Keith Curry (currykei)</td><td>1/19/24 11:24 AM</td><td></td><td><div class="grp"><div class="g g1"><svg style="left:13px;top:7px" width="14" height="14" viewBox="0 0 512 512"><path fill="#fff" d="M410.3 231l11.3-11.3-33.9-33.9-62.1-62.1L291.7 89.8l-11.3 11.3-22.6 22.6L58.6 322.9c-10.4 10.4-18 23.300-22.2 37.4L1 480.7c-2.5 8.4-.2 17.5 6.1 23.7s15.3 8.5 23.7 6.1l120.3-35.4c14.1-4.2 27-11.8 37.4-22.2L387.7 253.7 410.3 231zM160 399.4l-9.1 22.7c-4 3.1-8.5 5.4-13.3 6.9L59.4 452l23-78.1c1.4-4.9 3.8-9.4 6.9-13.3l22.7-9.1v32c0 8.8 7.2 16 16 16h32zM362.7 18.7L348.3 33.2 325.7 55.8 314.3 67.1l33.9 33.9 62.1 62.1 33.9 33.9 11.3-11.3 22.6-22.6 14.5-14.5c25-25 25-65.5 0-90.5L453.3 18.7c-25-25-65.5-25-90.5 0zm-47.4 168l-144 144c-6.2 6.2-16.4 6.2-22.6 0s-6.2-16.4 0-22.6l144-144c6.2-6.2 16.4-6.2 22.6 0s6.2 16.4 0 22.6z"/></svg></div><div class="g g2"><svg style="left:13px;top:7px" width="13.4" height="13.4" viewBox="0 0 512 512"><path fill="#333" d="M416 208c0 45.9-14.9 88.3-40 122.7L502.6 457.4c12.5 12.5 12.5 32.8 0 45.3s-32.8 12.5-45.3 0L330.7 376c-34.4 25.2-76.8 40-122.7 40C93.1 416 0 322.9 0 208S93.1 0 208 0S416 93.1 416 208zM208 352a144 144 0 1 0 0-288 144 144 0 1 0 0 288z"/></svg></div><div class="g g3"><svg style="left:13.9px;top:6.8px" width="13.2" height="14.2" viewBox="0 0 13.2 14.2"><path fill="#fff" fill-rule="evenodd" d="M2.5 2.1V1.2A1.2 1.2 0 0 1 4.9 1.2V2.1H8.3V1.2A1.2 1.2 0 0 1 10.7 1.2V2.1H12A1.2 1.2 0 0 1 13.2 3.3V4.3H0V3.3A1.2 1.2 0 0 1 1.2 2.1ZM0 4.9H13.2V13A1.2 1.2 0 0 1 12 14.2H1.2A1.2 1.2 0 0 1 0 13ZM2.6 7.1h1.4v1.4h-1.4ZM5.9 7.1h1.4v1.4h-1.4ZM9.2 7.1h1.4v1.4h-1.4ZM2.6 10.5h1.4v1.4h-1.4ZM5.9 10.5h1.4v1.4h-1.4ZM9.2 10.5h1.4v1.4h-1.4Z"/></svg></div><div class="g g4"><svg style="left:12px;top:7px" width="18" height="14" viewBox="0 0 18 14"><g fill="none" stroke="#fff" stroke-width="2.1"><rect x="0.75" y="5.15" width="9.7" height="4.9" rx="2.45" transform="rotate(-45 5.6 7.6)"/><rect x="7.61" y="2.82" width="9.7" height="4.9" rx="2.45" transform="rotate(-45 12.46 5.27)"/></g></svg></div><div class="g g5"><svg style="left:14.3px;top:7px" width="13" height="14.3" viewBox="0 0 13 14.3"><path fill="#fff" fill-rule="evenodd" d="M4.5 0H8.5L8.9 .4H12.4A.6 .6 0 0 1 13 1V1.6A.4 .4 0 0 1 12.6 2H.4A.4 .4 0 0 1 0 1.6V1A.6 .6 0 0 1 .6 .4H4.1ZM1 2.4H12V12.7A1.6 1.6 0 0 1 10.4 14.3H2.6A1.6 1.6 0 0 1 1 12.7ZM3.55 4.4V12H4.45V4.4ZM6.05 4.4V12H6.95V4.4ZM8.55 4.4V12H9.45V4.4Z"/></svg></div></div></td></tr>
</tbody>
</table>
</body></html>
